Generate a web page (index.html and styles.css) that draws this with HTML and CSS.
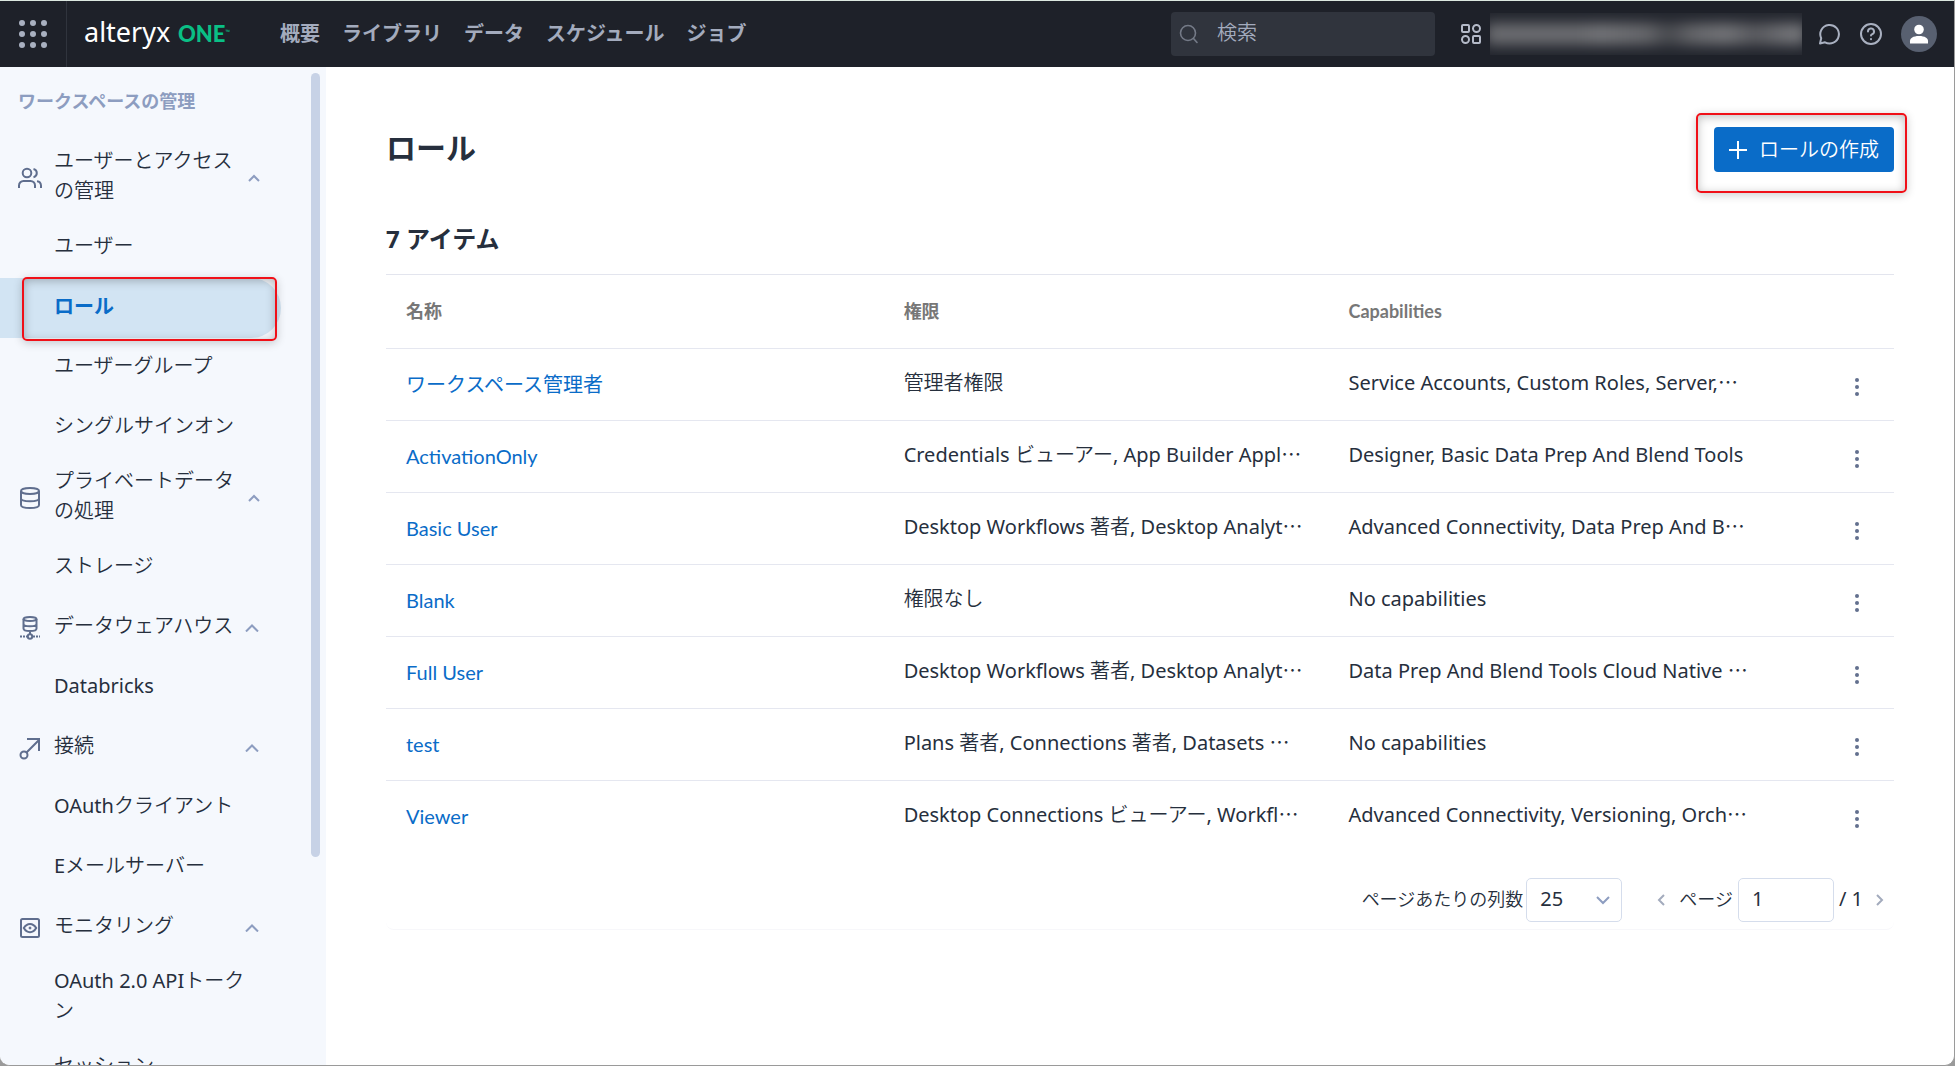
FILE: index.html
```html
<!DOCTYPE html>
<html lang="ja">
<head>
<meta charset="utf-8">
<title>ロール</title>
<link rel="stylesheet" href="styles.css">
</head>
<body>
<div class="app">
  <header class="topbar">
    <button class="apps" aria-label="アプリ">
      <svg width="28" height="28" viewBox="0 0 28 28" fill="#a9b0c0"><circle cx="3" cy="3" r="3"/><circle cx="14" cy="3" r="3"/><circle cx="25" cy="3" r="3"/><circle cx="3" cy="14" r="3"/><circle cx="14" cy="14" r="3"/><circle cx="25" cy="14" r="3"/><circle cx="3" cy="25" r="3"/><circle cx="14" cy="25" r="3"/><circle cx="25" cy="25" r="3"/></svg>
    </button>
    <a class="logo" href="#"><span class="logo-name">alteryx</span><span class="logo-one">ONE</span><span class="logo-tm">™</span></a>
    <nav class="mainnav">
      <a href="#">概要</a><a href="#">ライブラリ</a><a href="#">データ</a><a href="#">スケジュール</a><a href="#">ジョブ</a>
    </nav>
    <label class="search">
      <svg width="20" height="20" viewBox="0 0 20 20" fill="none" stroke="#747a87" stroke-width="1.6" stroke-linecap="round"><circle cx="9" cy="9" r="7.5"/><path d="M14.5 14.5 18 18.5"/></svg>
      <input type="search" placeholder="検索" aria-label="検索">
    </label>
    <div class="workspace">
      <svg width="22" height="22" viewBox="0 0 22 22" fill="none" stroke="#b4bac8" stroke-width="2"><rect x="2" y="2" width="7" height="7" rx="1"/><circle cx="16.500" cy="5.500" r="3.500"/><circle cx="5.500" cy="16.500" r="3.500"/><rect x="13" y="13" width="7" height="7" rx="1"/></svg>
      <div class="redacted"><i></i></div>
    </div>
    <div class="tools">
      <button aria-label="チャット"><svg width="24" height="24" viewBox="0 0 24 24" fill="none" stroke="#a9b0c0" stroke-width="2" stroke-linejoin="round"><path d="M3 21.500 4.200 16.200A9.300 9.300 0 1 1 8 20.300Z"/></svg></button>
      <button aria-label="ヘルプ"><svg width="24" height="24" viewBox="0 0 24 24" fill="none" stroke="#a9b0c0" stroke-width="2" stroke-linecap="round"><circle cx="12" cy="12" r="10"/><path d="M9 9.500a3 3 0 1 1 4.300 2.700c-.9.500-1.300.9-1.300 1.300"/><path d="M12 17v.2"/></svg></button>
      <button class="avatar" aria-label="アカウント"><svg width="20" height="20" viewBox="0 0 20 20" fill="#fff"><circle cx="10" cy="5.500" r="4.800"/><path d="M1 19.500v-2.300c0-3 3-5.200 9-5.200s9 2.200 9 5.200v2.300Z"/></svg></button>
    </div>
  </header>

  <div class="body">
    <aside class="sidebar">
      <h2>ワークスペースの管理</h2>
      <ul>
        <li class="group tall"><svg class="ico" width="24" height="24" viewBox="0 0 24 24" fill="none" stroke="#5f6e8e" stroke-width="2"><circle cx="9" cy="7" r="4.300"/><path d="M1 22v-2.500A4.500 4.500 0 0 1 5.500 15h7a4.500 4.500 0 0 1 4.500 4.500V22M15.500 3a4.200 4.200 0 0 1 0 8.200M19 15.200a4.500 4.500 0 0 1 4 4.300V22"/></svg><a href="#">ユーザーとアクセスの管理</a><svg class="chev" width="14" height="8" viewBox="0 0 14 8"><path d="m2 7 5-5 5 5"/></svg></li>
        <li><a href="#">ユーザー</a></li>
        <li class="selected"><a href="#">ロール</a><span class="callout callout-item"></span></li>
        <li><a href="#">ユーザーグループ</a></li>
        <li><a href="#">シングルサインオン</a></li>
        <li class="group tall"><svg class="ico" width="24" height="24" viewBox="0 0 24 24" fill="none" stroke="#5f6e8e" stroke-width="2"><ellipse cx="12" cy="5" rx="9" ry="3"/><path d="M3 5v14c0 2.500 4 3 9 3s9-.5 9-3V5M3 12.500c0 2 4 2.800 9 2.800s9-.8 9-2.800"/></svg><a href="#">プライベートデータの処理</a><svg class="chev" width="14" height="8" viewBox="0 0 14 8"><path d="m2 7 5-5 5 5"/></svg></li>
        <li><a href="#">ストレージ</a></li>
        <li class="group"><svg class="ico" width="24" height="24" viewBox="0 0 24 24" fill="none" stroke="#5f6e8e" stroke-width="2"><ellipse cx="12" cy="3" rx="6.500" ry="2"/><path d="M5.500 3v9.500c0 1.500 2.500 2.500 6.500 2.500s6.500-1 6.500-2.500V3M5.500 8c0 1.500 2.500 2.300 6.500 2.300s6.500-.8 6.500-2.300M12 15v3"/><circle cx="12" cy="20.500" r="2.200"/><path d="M2 20.500h7M15 20.500h7" stroke-dasharray="2 1"/></svg><a href="#">データウェアハウス</a><svg class="chev" width="14" height="8" viewBox="0 0 14 8"><path d="m1 7.500 6-6 6 6"/></svg></li>
        <li><a href="#">Databricks</a></li>
        <li class="group"><svg class="ico" width="24" height="24" viewBox="0 0 24 24" fill="none" stroke="#5f6e8e" stroke-width="2"><circle cx="6" cy="19" r="3.500"/><path d="M8.500 16.500 21 4M9 3h12v12"/></svg><a href="#">接続</a><svg class="chev" width="14" height="8" viewBox="0 0 14 8"><path d="m1 7.500 6-6 6 6"/></svg></li>
        <li><a href="#">OAuthクライアント</a></li>
        <li><a href="#">Eメールサーバー</a></li>
        <li class="group"><svg class="ico" width="24" height="24" viewBox="0 0 24 24" fill="none" stroke="#5f6e8e" stroke-width="2"><rect x="3" y="3" width="18" height="18" rx="1.500"/><path d="M5.800 12C9 6.500 15 6.500 18.200 12 15 17.500 9 17.500 5.800 12Z"/><circle cx="12" cy="12" r="1" fill="#5f6e8e" stroke-width="1"/></svg><a href="#">モニタリング</a><svg class="chev" width="14" height="8" viewBox="0 0 14 8"><path d="m1 7.500 6-6 6 6"/></svg></li>
        <li class="tall"><a href="#">OAuth 2.0 APIトークン</a></li>
        <li><a href="#">セッション</a></li>
      </ul>
      <div class="scrollthumb"></div>
    </aside>

    <main class="main">
      <div class="heading">
        <h1>ロール</h1>
        <div class="create-wrap">
          <button class="create"><svg width="18" height="18" viewBox="0 0 18 18" stroke="#fff" stroke-width="2"><path d="M9 0v18M0 9h18"/></svg>ロールの作成</button>
          <span class="callout callout-button"></span>
        </div>
      </div>
      <p class="count">7 アイテム</p>
      <section class="card">
        <table>
          <colgroup><col class="c-name"><col class="c-perm"><col class="c-cap"><col></colgroup>
          <thead><tr><th>名称</th><th>権限</th><th>Capabilities</th><th></th></tr></thead>
          <tbody>
            <tr><td><a href="#">ワークスペース管理者</a></td><td>管理者権限</td><td>Service Accounts, Custom Roles, Server,<span class="more">…</span></td><td class="act"><button class="kebab" aria-label="操作"><i></i><i></i><i></i></button></td></tr>
            <tr><td><a href="#">ActivationOnly</a></td><td>Credentials ビューアー, App Builder Appl<span class="more">…</span></td><td>Designer, Basic Data Prep And Blend Tools</td><td class="act"><button class="kebab" aria-label="操作"><i></i><i></i><i></i></button></td></tr>
            <tr><td><a href="#">Basic User</a></td><td>Desktop Workflows 著者, Desktop Analyt<span class="more">…</span></td><td>Advanced Connectivity, Data Prep And B<span class="more">…</span></td><td class="act"><button class="kebab" aria-label="操作"><i></i><i></i><i></i></button></td></tr>
            <tr><td><a href="#">Blank</a></td><td>権限なし</td><td>No capabilities</td><td class="act"><button class="kebab" aria-label="操作"><i></i><i></i><i></i></button></td></tr>
            <tr><td><a href="#">Full User</a></td><td>Desktop Workflows 著者, Desktop Analyt<span class="more">…</span></td><td>Data Prep And Blend Tools Cloud Native <span class="more">…</span></td><td class="act"><button class="kebab" aria-label="操作"><i></i><i></i><i></i></button></td></tr>
            <tr><td><a href="#">test</a></td><td>Plans 著者, Connections 著者, Datasets <span class="more">…</span></td><td>No capabilities</td><td class="act"><button class="kebab" aria-label="操作"><i></i><i></i><i></i></button></td></tr>
            <tr><td><a href="#">Viewer</a></td><td>Desktop Connections ビューアー, Workfl<span class="more">…</span></td><td>Advanced Connectivity, Versioning, Orch<span class="more">…</span></td><td class="act"><button class="kebab" aria-label="操作"><i></i><i></i><i></i></button></td></tr>
          </tbody>
        </table>
        <div class="pager">
          <label for="rows">ページあたりの列数</label>
          <div class="selectbox"><select id="rows"><option>25</option></select><svg width="14" height="9" viewBox="0 0 14 9"><path d="m1 1 6 6 6-6"/></svg></div>
          <button class="prev" aria-label="前へ"><svg width="8" height="12" viewBox="0 0 8 12"><path d="M7 1 2 6l5 5"/></svg></button>
          <label for="page">ページ</label>
          <input id="page" type="text" value="1">
          <span class="total">/ 1</span>
          <button class="next" aria-label="次へ"><svg width="8" height="12" viewBox="0 0 8 12"><path d="m1 1 5 5-5 5"/></svg></button>
        </div>
      </section>
    </main>
  </div>
</div>
</body>
</html>
```
FILE: styles.css
```css
* { box-sizing: border-box; }
html { background: #9a9a9a; }
body {
  margin: 0;
  font: 400 20px/30px "Noto Sans", "Noto Sans CJK JP DemiLight", "Noto Sans CJK JP Light", "Noto Sans CJK JP", sans-serif;
  color: #262f3d;
}
a { color: inherit; text-decoration: none; }
button { border: 0; padding: 0; background: none; font: inherit; color: inherit; display: flex; align-items: center; justify-content: center; }
svg { display: block; flex: none; }

.app {
  height: 100vh;
  display: flex;
  flex-direction: column;
  overflow: hidden;
  background: #fff;
  border-top: 1px solid #dce8e0;
  border-right: 1px solid #9a9a9a;
  border-bottom: 1px solid #9a9a9a;
  border-radius: 0 0 10px 10px;
}

/* Top bar */
.topbar { height: 66px; flex: none; display: flex; align-items: center; background: #1e2129; color: #a3abbd; }
.apps { width: 67px; height: 66px; border-right: 1px solid #30343d; }
.logo { display: flex; align-items: baseline; width: 194px; margin-left: 17px; font-family: "Noto Sans", sans-serif; font-weight: 400; line-height: 40px; }
.logo-name { color: #fff; font-size: 27px; width: 94px; padding-bottom: 4px; }
.logo-one { color: #0abf85; font: 900 22px/40px Lato, sans-serif; }
.logo-tm { color: #0abf85; font-size: 6px; align-self: flex-start; }
.mainnav { display: flex; gap: 22px; font-family: "Noto Sans CJK JP", sans-serif; font-weight: 700; padding: 0 0 3px 2px; }
.search { margin-left: auto; width: 264px; height: 44px; flex: none; display: flex; align-items: center; gap: 18px; padding-left: 8px; background: #30343d; border-radius: 4px; }
.search input { border: 0; outline: 0; padding: 0 0 3px; min-width: 0; flex: 1; background: none; font: inherit; font-weight: 400; color: #a3abbd; }
.search input::placeholder { color: #a3abbd; opacity: 1; }
.workspace { display: flex; align-items: center; gap: 8px; margin-left: 25px; }
.redacted { width: 312px; height: 42px; overflow: hidden; background: #22252d; display: flex; align-items: center; }
.redacted i { width: 320px; height: 22px; flex: none; margin-left: -4px; filter: blur(7px); background: linear-gradient(90deg, #6c6d71 0 30%, #75767a 35%, #68696d 50%, #494b50 57%, #68696d 65%, #75767a 75%, #5a5b60 84%, #75767a 95%); }
.tools { display: flex; align-items: center; gap: 18px; margin: 0 17px 0 15px; }
.avatar { width: 36px; height: 36px; border-radius: 50%; background: #586070; }

/* Sidebar */
.body { flex: 1; min-height: 0; display: flex; }
.sidebar { position: relative; width: 326px; flex: none; overflow: hidden; background: #f5f8fd; }
.sidebar h2 { margin: 0; padding: 18px 18px 23px; font-size: 18px; line-height: 30px; font-weight: 700; color: #8d9dc0; font-family: "Noto Sans CJK JP", sans-serif; }
.sidebar ul { list-style: none; margin: 0; padding: 0; }
.sidebar li { position: relative; height: 60px; width: 281px; padding: 0 27px 0 54px; display: flex; align-items: center; }
.sidebar li.tall { height: 80px; }
.sidebar li.group { padding: 0 0 0 18px; }
.sidebar li a { padding-bottom: 5px; }
.sidebar li.tall a { padding-bottom: 4px; }
.group .ico { margin-right: 12px; }
.group a { width: 184px; }
.chev { margin-left: 7px; fill: none; stroke: #8d9dc0; stroke-width: 2; }
.tall .chev { margin-left: 9px; }
.sidebar li.selected { background: #d2e4f3; color: #0a6cc8; font-weight: 700; font-family: "Noto Sans CJK JP", sans-serif; border-radius: 0 30px 30px 0; }
.scrollthumb { position: absolute; top: 6px; right: 6px; width: 9px; height: 784px; border-radius: 5px; background: #c7d2e6; }

/* Red highlight frames */
.callout { position: absolute; border: 2px solid #f01018; border-radius: 5px; pointer-events: none; box-shadow: 0 2px 10px rgba(0, 0, 0, .2), inset 0 2px 10px rgba(0, 0, 0, .25); }
.callout-item { inset: -1px 4px -3px 22px; }
.callout-button { inset: -14px -13px -21px -18px; }

/* Main */
.main { flex: 1; min-width: 0; padding: 60px 60px 0; }
.heading { display: flex; justify-content: space-between; align-items: center; height: 45px; }
h1 { margin: 0; padding-bottom: 8px; font-family: "Noto Sans CJK JP", sans-serif; font-size: 30px; line-height: 36px; font-weight: 700; }
.create-wrap { position: relative; }
.create { width: 180px; height: 45px; gap: 12px; background: #0a6cc8; color: #fff; border-radius: 4px; font-size: 20px; }
.count { margin: 51px 0 20px; font-size: 24px; line-height: 31px; font-weight: 700; font-family: "Noto Sans", "Noto Sans CJK JP", sans-serif; }
.card { border-top: 1px solid #e3e5ee; border-bottom: 1px solid #f7f7fa; border-radius: 0 0 8px 8px; }
table { width: 100%; border-collapse: collapse; table-layout: fixed; }
.c-name { width: 33%; }
.c-perm { width: 29.5%; }
.c-cap { width: 32%; }
th { height: 73px; padding: 0 0 0 20px; text-align: left; font: 700 18px/30px Lato, "Noto Sans CJK JP", sans-serif; color: #777; }
td { height: 72px; padding: 0 0 3px 20px; border-top: 1px solid #e5e7f0; white-space: nowrap; }
td:first-child { font-family: Lato, "Noto Sans CJK JP", sans-serif; color: #0a6cc8; padding: 0 0 0 20px; }
.more { font-family: "Noto Sans CJK JP", sans-serif; }
.act { padding: 6px 35px 0 0; }
.kebab { flex-direction: column; gap: 3px; margin-left: auto; }
.kebab i { width: 4px; height: 4px; border-radius: 50%; background: #63708e; }

.pager { display: flex; align-items: center; justify-content: flex-end; height: 77px; padding: 20px 10px 2px 0; }
.pager label { font-size: 18px; padding-bottom: 2px; }
.selectbox { position: relative; margin-left: 3px; }
.selectbox svg { position: absolute; right: 12px; top: 18px; fill: none; stroke: #8d9dc0; stroke-width: 2; pointer-events: none; }
.pager select, .pager input { appearance: none; width: 96px; height: 44px; padding: 0 0 2px 13px; border: 1px solid #d5ddec; border-radius: 5px; background: #fff; font: inherit; color: inherit; }
.pager input { margin: 0 5px; }
.pager button svg { fill: none; stroke: #a3abbd; stroke-width: 2; }
.prev { margin: 0 14px 0 35px; }
.total { padding-bottom: 2px; }
.next { margin-left: 13px; }
```
